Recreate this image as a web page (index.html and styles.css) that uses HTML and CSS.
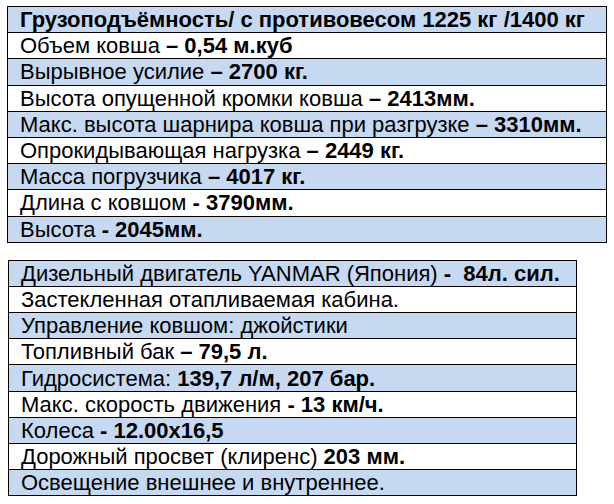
FILE: index.html
```html
<!DOCTYPE html>
<html lang="ru">
<head>
<meta charset="utf-8">
<link rel="stylesheet" href="styles.css">
</head>
<body>
<table class="spec spec-main">
  <tr class="alt"><td><b>Грузоподъёмность/ с противовесом 1225 кг /1400 кг</b></td></tr>
  <tr><td>Объем ковша <b>– 0,54 м.куб</b></td></tr>
  <tr class="alt"><td>Вырывное усилие <b>– 2700 кг.</b></td></tr>
  <tr><td>Высота опущенной кромки ковша <b>– 2413мм.</b></td></tr>
  <tr class="alt"><td>Макс. высота шарнира ковша при разгрузке <b>– 3310мм.</b></td></tr>
  <tr><td>Опрокидывающая нагрузка <b>– 2449 кг.</b></td></tr>
  <tr class="alt"><td>Масса погрузчика <b>– 4017 кг.</b></td></tr>
  <tr><td>Длина с ковшом <b>- 3790мм.</b></td></tr>
  <tr class="alt"><td>Высота <b>- 2045мм.</b></td></tr>
</table>
<table class="spec spec-extra">
  <tr class="alt"><td>Дизельный двигатель YANMAR (Япония) <b>-&nbsp; 84л. сил.</b></td></tr>
  <tr><td>Застекленная отапливаемая кабина.</td></tr>
  <tr class="alt"><td>Управление ковшом: джойстики</td></tr>
  <tr><td>Топливный бак <b>– 79,5 л.</b></td></tr>
  <tr class="alt"><td>Гидросистема: <b>139,7 л/м, 207 бар.</b></td></tr>
  <tr><td>Макс. скорость движения <b>- 13 км/ч.</b></td></tr>
  <tr class="alt"><td>Колеса <b>- 12.00x16,5</b></td></tr>
  <tr><td>Дорожный просвет (клиренс) <b>203 мм.</b></td></tr>
  <tr class="alt"><td>Освещение внешнее и внутреннее.</td></tr>
</table>
</body>
</html>
```
FILE: styles.css
```css
html, body {
  margin: 0;
  padding: 0;
  background: #ffffff;
}
body {
  padding: 6px 0 0 7px;
  font-family: "Liberation Sans", Arial, sans-serif;
  font-size: 22px;
  color: #000000;
}
.spec {
  border-collapse: collapse;
  table-layout: fixed;
}
.spec-main {
  width: 600px;
}
.spec-extra {
  width: 569px;
  margin-top: 17px;
  margin-left: 1px;
}
.spec td {
  border: 1px solid #000000;
  height: 25.2px;
  padding: 0 0 0 12px;
  line-height: 25px;
  white-space: nowrap;
  vertical-align: middle;
  overflow: hidden;
}
.spec tr.alt td {
  background: #c6d9f1;
}
.spec b {
  font-weight: bold;
}
```
